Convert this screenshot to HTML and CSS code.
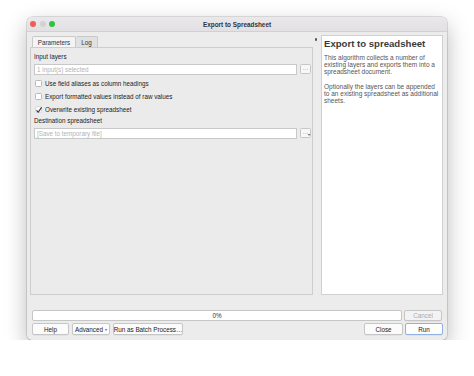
FILE: index.html
```html
<!DOCTYPE html>
<html>
<head>
<meta charset="utf-8">
<link rel="stylesheet" href="styles.css">
</head>
<body>
<div class="window">
  <div class="titlebar">
    <div class="lights"><span class="light red"></span><span class="light grey"></span><span class="light green"></span></div>
    <div class="title">Export to Spreadsheet</div>
  </div>
  <div class="winbody">
    <div class="main">
      <div class="left">
        <div class="tabs">
          <div class="tab active">Parameters</div>
          <div class="tab">Log</div>
        </div>
        <div class="pane">
          <div class="label">Input layers</div>
          <div class="field-row">
            <div class="field placeholder">1 input(s) selected</div>
            <div class="dots">…</div>
          </div>
          <div class="check first"><span class="box"></span>Use field aliases as column headings</div>
          <div class="check"><span class="box"></span>Export formatted values instead of raw values</div>
          <div class="check"><span class="box checked"><svg viewBox="0 0 8 8" width="8" height="8"><path d="M1.5 4.3 L3.2 6.2 L6.6 1.4" fill="none" stroke="#333" stroke-width="1.1"/></svg></span>Overwrite existing spreadsheet</div>
          <div class="label dest">Destination spreadsheet</div>
          <div class="field-row">
            <div class="field placeholder">[Save to temporary file]</div>
            <div class="dots menu">…<span class="tri">▾</span></div>
          </div>
        </div>
      </div>
      <div class="splitter"><span class="handle"></span></div>
      <div class="help">
        <div class="help-title">Export to spreadsheet</div>
        <p>This algorithm collects a number of existing layers and exports them into a spreadsheet document.</p>
        <p class="second">Optionally the layers can be appended to an existing spreadsheet as additional sheets.</p>
      </div>
    </div>
    <div class="progress-row">
      <div class="progress">0%</div>
      <div class="btn cancel">Cancel</div>
    </div>
    <div class="button-row">
      <div class="btn help-btn">Help</div>
      <div class="btn adv">Advanced <span class="arrow">▾</span></div>
      <div class="btn batch">Run as Batch Process…</div>
      <div class="spacer"></div>
      <div class="btn close">Close</div>
      <div class="btn run">Run</div>
    </div>
  </div>
</div>
</body>
</html>
```
FILE: styles.css
```css
* { box-sizing: border-box; }
html, body { margin: 0; padding: 0; background: #ffffff; }
body {
  padding: 17px 27px 0 27px;
  font-family: "Liberation Sans", Arial, sans-serif;
  font-size: 6.3px;
  color: #222;
}
.window {
  width: 420px;
  height: 323px;
  border-radius: 5px;
  overflow: hidden;
  background: #ececec;
  box-shadow: 0 0 0 0.5px rgba(0,0,0,0.22), 0 8px 22px rgba(0,0,0,0.28);
  display: flex;
  flex-direction: column;
}
.titlebar {
  height: 15px;
  flex: none;
  background: linear-gradient(#ebe8ec, #e3e0e4);
  border-bottom: 1px solid #d2d0d3;
  display: flex;
  align-items: center;
  position: relative;
}
.lights { display: flex; gap: 3.5px; padding-left: 3px; }
.light { width: 6px; height: 6px; border-radius: 50%; display: block; }
.red { background: #ee5e56; }
.grey { background: #d3d1d4; }
.green { background: #2ec440; }
.title {
  position: absolute;
  left: 0; right: 0; top: 0; bottom: 0;
  display: flex; align-items: center; justify-content: center;
  font-weight: bold;
  font-size: 6.4px;
  color: #333;
}
.winbody {
  flex: 1;
  display: flex;
  flex-direction: column;
  padding: 3px 4px 4px 3px;
}
.main { display: flex; height: 260px; flex: none; }
.left { width: 283px; display: flex; flex-direction: column; padding-top: 1px; }
.tabs { display: flex; padding-left: 2px; height: 11px; }
.tab {
  height: 11px;
  padding: 0 5px;
  border: 1px solid #c9c9c9;
  border-bottom: none;
  background: #e1e1e1;
  display: flex; align-items: center;
  color: #333;
  border-radius: 2px 2px 0 0;
}
.tab.active { width: 44px; background: #f4f4f4; justify-content: center; padding: 0; }
.tab + .tab { width: 22px; justify-content: center; padding: 0; border-left: none; }
.pane {
  flex: 1;
  border: 1px solid #cdcdcd;
  background: #ebebeb;
  padding: 5px 1px 0 3px;
}
.label { height: 8px; line-height: 8px; color: #222; }
.label.dest { margin-top: 1px; }
.field-row { display: flex; gap: 3px; margin-top: 3px; align-items: flex-start; }
.field {
  width: 263px;
  height: 11px;
  background: #fff;
  border: 1px solid #c8c8c8;
  line-height: 9px;
  padding-left: 2px;
}
.placeholder { color: #b3b3b3; }
.dots {
  width: 11px; height: 10px;
  background: #f7f7f7;
  border: 1px solid #c6c6c6;
  border-radius: 1.5px;
  font-size: 6px;
  line-height: 6px;
  text-align: center;
  color: #666;
  position: relative;
}
.tri { position: absolute; right: 0; bottom: 0; font-size: 4px; line-height: 4px; color: #555; }
.check {
  height: 13px;
  display: flex;
  align-items: center;
  padding-left: 1px;
  color: #222;
}
.check.first { margin-top: 2px; }
.box {
  width: 7px; height: 7px;
  border: 1px solid #b8b8b8;
  border-radius: 1.5px;
  background: #fff;
  margin-right: 3px;
  display: flex; align-items: center; justify-content: center;
}
.box.checked { border-color: #d8d8d8; background: #f6f6f6; }
.box svg { display: block; flex: none; }
.splitter { width: 8px; position: relative; }
.handle { position: absolute; left: 2px; top: 3px; width: 2px; height: 3px; background: #555; border-radius: 1px; }
.help {
  width: 122px;
  background: #fff;
  border: 1px solid #d0d0d0;
  padding: 2px 2px 0 2px;
  color: #555;
}
.help-title { font-size: 9.6px; line-height: 12px; font-weight: bold; color: #3a3a3a; }
.help p { margin: 4px 0 0 0; line-height: 7px; font-size: 6.5px; }
.help p.second { margin-top: 8px; }
.progress-row { display: flex; gap: 2px; margin-top: 15px; padding-left: 2px; height: 11px; }
.progress {
  width: 370px;
  height: 11px;
  background: #fff;
  border: 1px solid #c6c6c6;
  border-radius: 2px;
  text-align: center;
  line-height: 9px;
  color: #333;
}
.btn {
  height: 11px;
  background: #fbfbfb;
  border: 1px solid #c6c6c6;
  border-radius: 2px;
  display: flex; align-items: center; justify-content: center;
  color: #222;
  white-space: nowrap;
  box-shadow: 0 0.5px 0.5px rgba(0,0,0,0.08);
}
.cancel { width: 38px; color: #aaa; background: #f3f3f3; }
.button-row { display: flex; margin-top: 2px; padding-left: 2px; height: 12px; gap: 3px; }
.button-row .btn { height: 12px; }
.help-btn { width: 37px; }
.adv { width: 38px; }
.arrow { font-size: 4px; margin-left: 2px; color: #666; }
.batch { width: 70px; }
.spacer { flex: 1; }
.close { width: 39px; margin-right: -1px; }
.run { width: 38px; border-color: #8fb1e3; background: #fdfdfd; }
```
